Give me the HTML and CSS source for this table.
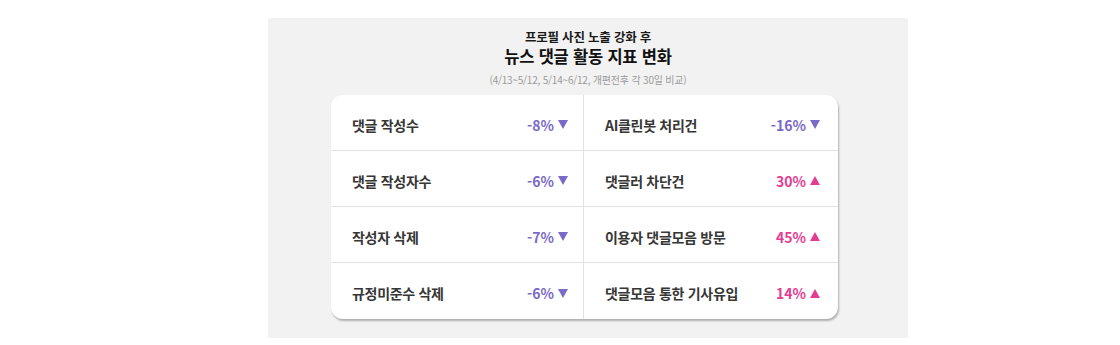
FILE: index.html
```html
<!DOCTYPE html>
<html lang="ko">
<head>
<meta charset="utf-8">
<link rel="stylesheet" href="styles.css">
</head>
<body>
<div class="panel">
  <div class="kicker">프로필 사진 노출 강화 후</div>
  <h1 class="title">뉴스 댓글 활동 지표 변화</h1>
  <div class="note">(4/13~5/12, 5/14~6/12, 개편전후 각 30일 비교)</div>
  <div class="card">
    <div class="cell left"><span class="label">댓글 작성수</span><span class="val down">-8%<svg class="tri" viewBox="0 0 10 9"><path d="M0 0H10L5 9Z"/></svg></span></div>
    <div class="cell"><span class="label">AI클린봇 처리건</span><span class="val down">-16%<svg class="tri" viewBox="0 0 10 9"><path d="M0 0H10L5 9Z"/></svg></span></div>
    <div class="cell left"><span class="label">댓글 작성자수</span><span class="val down">-6%<svg class="tri" viewBox="0 0 10 9"><path d="M0 0H10L5 9Z"/></svg></span></div>
    <div class="cell"><span class="label">댓글러 차단건</span><span class="val up">30%<svg class="tri" viewBox="0 0 10 9"><path d="M0 9H10L5 0Z"/></svg></span></div>
    <div class="cell left"><span class="label">작성자 삭제</span><span class="val down">-7%<svg class="tri" viewBox="0 0 10 9"><path d="M0 0H10L5 9Z"/></svg></span></div>
    <div class="cell"><span class="label">이용자 댓글모음 방문</span><span class="val up">45%<svg class="tri" viewBox="0 0 10 9"><path d="M0 9H10L5 0Z"/></svg></span></div>
    <div class="cell left last"><span class="label">규정미준수 삭제</span><span class="val down">-6%<svg class="tri" viewBox="0 0 10 9"><path d="M0 0H10L5 9Z"/></svg></span></div>
    <div class="cell last"><span class="label">댓글모음 통한 기사유입</span><span class="val up">14%<svg class="tri" viewBox="0 0 10 9"><path d="M0 9H10L5 0Z"/></svg></span></div>
  </div>
</div>
</body>
</html>
```
FILE: styles.css
```css
html, body {
  margin: 0;
  padding: 0;
  background: #ffffff;
}
body {
  padding: 18px 0 0 268px;
  font-family: "Noto Sans CJK KR", "Noto Sans", sans-serif;
}
.panel {
  width: 640px;
  height: 320px;
  background: #f2f2f2;
  box-sizing: border-box;
  padding-top: 10px;
  display: flex;
  flex-direction: column;
  align-items: center;
}
.kicker {
  font-size: 12.5px;
  font-weight: 700;
  color: #1a1a1a;
  line-height: 18px;
  letter-spacing: -0.2px;
}
.title {
  margin: 0;
  font-size: 16.5px;
  font-weight: 700;
  color: #111;
  line-height: 21px;
  letter-spacing: -0.2px;
}
.note {
  margin-top: 6px;
  font-size: 10px;
  color: #9a9a9a;
  line-height: 14px;
  letter-spacing: -0.2px;
}
.card {
  margin-top: 8px;
  align-self: flex-start;
  margin-left: 63px;
  width: 507px;
  background: #fff;
  border-radius: 12px;
  box-shadow: 1px 2px 2px rgba(0,0,0,0.28);
  display: grid;
  grid-template-columns: 253px 254px;
  grid-auto-rows: 56px;
  overflow: hidden;
}
.cell {
  display: flex;
  align-items: center;
  justify-content: space-between;
  padding: 4px 18px 0 21px;
  border-bottom: 1px solid #e2e2e2;
  box-sizing: border-box;
}
.cell.left {
  border-right: 1px solid #e2e2e2;
  padding-right: 15px;
}
.cell.last {
  border-bottom: none;
}
.label {
  font-size: 14px;
  font-weight: 700;
  color: #363636;
  letter-spacing: -0.3px;
}
.val {
  font-size: 14px;
  font-weight: 600;
  display: flex;
  align-items: center;
  gap: 4px;
}
.tri {
  width: 10px;
  height: 9px;
}
.down { color: #7b6ac6; }
.down .tri { fill: #7b6ac6; }
.up { color: #e23c93; }
.up .tri { fill: #e23c93; }
```
